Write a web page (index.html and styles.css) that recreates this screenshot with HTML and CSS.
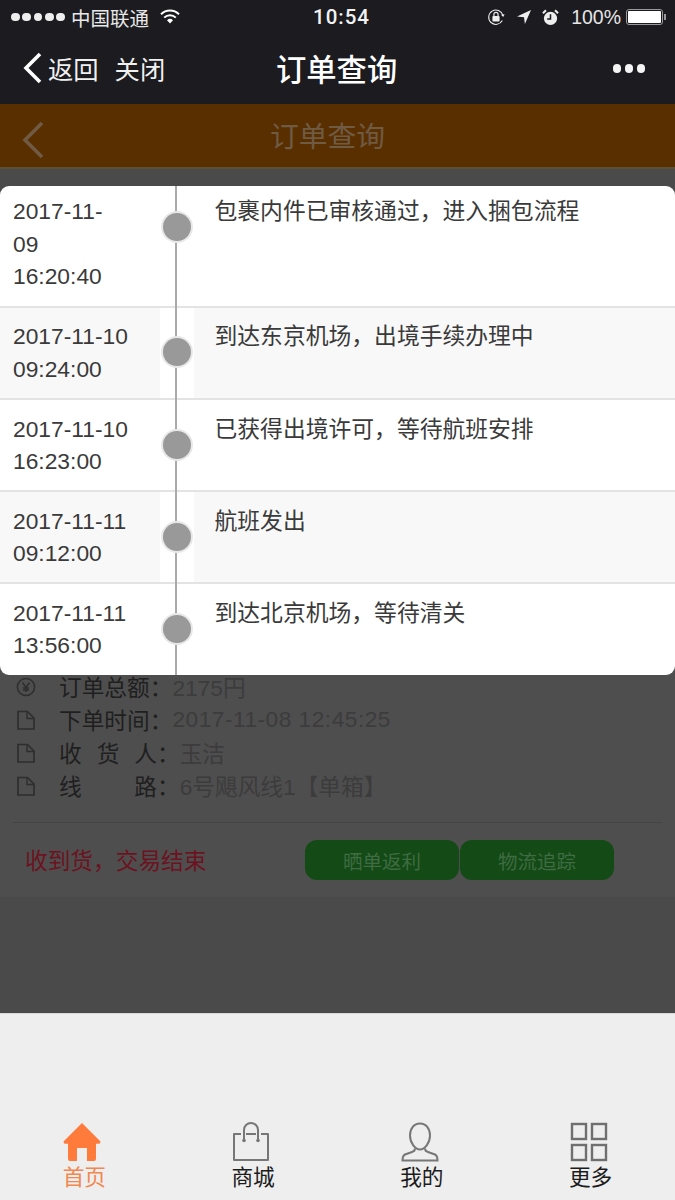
FILE: index.html
```html
<!DOCTYPE html>
<html lang="zh-CN">
<head>
<meta charset="utf-8">
<title>订单查询</title>
<link rel="stylesheet" href="styles.css">
</head>
<body>
<div class="app">
  <div class="chrome">
    <div class="status">
      <div class="status-left">
        <span class="signal"><i></i><i></i><i></i><i></i><i></i></span>
        <span class="carrier">中国联通</span>
        <svg class="wifi" viewBox="0 0 20 15" width="20" height="15"><path d="M1 5.2a13 13 0 0 1 18 0" fill="none" stroke="#fff" stroke-width="2"/><path d="M4.2 8.6a8.4 8.4 0 0 1 11.6 0" fill="none" stroke="#fff" stroke-width="2"/><path d="M7 11.3a4.3 4.3 0 0 1 6 0L10 14.4z" fill="#fff"/></svg>
      </div>
      <div class="clock">10:54</div>
      <div class="status-right">
        <svg class="st-icon" viewBox="0 0 20 20" width="18" height="18"><path d="M17.6 8A8 8 0 1 0 17 14" fill="none" stroke="#eee" stroke-width="1.2"/><path d="M15.6 7.6 18 10l1.6-3z" fill="#eee"/><rect x="6" y="9" width="8" height="6" rx="1" fill="#eee"/><path d="M7.7 9V7.2a2.3 2.3 0 0 1 4.6 0V9" fill="none" stroke="#eee" stroke-width="1.3"/></svg>
        <svg class="st-icon st-arrow" viewBox="0 0 16 16" width="16" height="16"><path d="M15 1 1 7.4l7 .9.9 6.7z" fill="#eee"/></svg>
        <svg class="st-icon" viewBox="0 0 18 18" width="17" height="17"><circle cx="9" cy="10" r="7" fill="#eee"/><path d="M9 5.5V10.5H5.5" fill="none" stroke="#1b1b20" stroke-width="1.6"/><path d="M1 4.5 4.2 1.4M17 4.5 13.8 1.4" stroke="#eee" stroke-width="2.2"/></svg>
        <span class="battery-text">100%</span>
        <span class="battery"><b></b></span>
      </div>
    </div>
    <div class="nav">
      <div class="nav-left">
        <svg class="nav-back" viewBox="0 0 20 32" width="20" height="32"><path d="M17 2 3 16l14 14" fill="none" stroke="#fff" stroke-width="3.6"/></svg>
        <span class="nav-link">返回</span>
        <span class="nav-link nav-close">关闭</span>
      </div>
      <div class="nav-title">订单查询</div>
      <div class="nav-more"><i></i><i></i><i></i></div>
    </div>
  </div>

  <header class="page-head">
    <svg class="page-back" viewBox="0 0 24 38" width="24" height="38"><path d="M21 2 4 19l17 17" fill="none" stroke="#6f5a44" stroke-width="3.6"/></svg>
    <h1 class="page-title">订单查询</h1>
  </header>

  <main class="page">
    <section class="order">
      <div class="info-row">
        <svg class="info-icon" viewBox="0 0 20 20" width="20" height="20"><circle cx="10" cy="10" r="8.6" fill="none" stroke="#2e2e2e" stroke-width="1.5"/><path d="M6.5 5.5 10 10.5l3.5-5M10 10.5V15M7 11h6M7 13h6" fill="none" stroke="#2e2e2e" stroke-width="1.4"/></svg>
        <span class="label"><span class="label-fill">订单总额</span>：</span>
        <span class="value">2175円</span>
      </div>
      <div class="info-row">
        <svg class="info-icon" viewBox="0 0 20 20" width="20" height="20"><path d="M2 1.500h9.500L18 8v11H2z" fill="none" stroke="#2e2e2e" stroke-width="1.700"/><path d="M11 1.500v7h7" fill="none" stroke="#2e2e2e" stroke-width="1.400"/></svg>
        <span class="label"><span class="label-fill">下单时间</span>：</span>
        <span class="value value-date">2017-11-08 12:45:25</span>
      </div>
      <div class="info-row">
        <svg class="info-icon" viewBox="0 0 20 20" width="20" height="20"><path d="M2 1.500h9.500L18 8v11H2z" fill="none" stroke="#2e2e2e" stroke-width="1.700"/><path d="M11 1.500v7h7" fill="none" stroke="#2e2e2e" stroke-width="1.400"/></svg>
        <span class="label"><span class="label-fill label-wide"><span>收</span><span>货</span><span>人</span></span>：</span>
        <span class="value">玉洁</span>
      </div>
      <div class="info-row">
        <svg class="info-icon" viewBox="0 0 20 20" width="20" height="20"><path d="M2 1.500h9.500L18 8v11H2z" fill="none" stroke="#2e2e2e" stroke-width="1.700"/><path d="M11 1.500v7h7" fill="none" stroke="#2e2e2e" stroke-width="1.400"/></svg>
        <span class="label"><span class="label-fill label-wide"><span>线</span><span>路</span></span>：</span>
        <span class="value">6号飓风线1【单箱】</span>
      </div>
      <div class="order-foot">
        <span class="order-state">收到货，交易结束</span>
        <div class="order-actions">
          <a class="btn">晒单返利</a>
          <a class="btn">物流追踪</a>
        </div>
      </div>
    </section>
  </main>

  <nav class="tabs">
    <a class="tab tab-active">
      <svg viewBox="0 0 38 40" width="38" height="40"><path d="M19 1 37 19a1.6 1.6 0 0 1-1.2 2.7H33V37a2 2 0 0 1-2 2h-7V26h-10v13H7a2 2 0 0 1-2-2V21.700H2.200A1.600 1.600 0 0 1 1 19z" fill="#ff7b3c"/></svg>
      <span>首页</span>
    </a>
    <a class="tab">
      <svg viewBox="0 0 38 40" width="38" height="40"><path d="M9 12H2v26h34V12h-7M14 12h10" fill="none" stroke="#777" stroke-width="2" stroke-linejoin="round"/><path d="M12 18V8a7 7 0 0 1 14 0v10" fill="none" stroke="#777" stroke-width="2"/><circle cx="12" cy="18.500" r="1.800" fill="#777"/><circle cx="26" cy="18.500" r="1.800" fill="#777"/></svg>
      <span>商城</span>
    </a>
    <a class="tab">
      <svg viewBox="0 0 38 40" width="38" height="40"><path d="M19 1.500c6 0 10 5 10 12 0 7-5 14-10 14s-10-7-10-14c0-7 4-12 10-12z" fill="none" stroke="#777" stroke-width="2"/><path d="M14 26.500c0 2-1 3-3 3.500l-7 2.500c-2 1-2.500 3-2.500 6h35c0-3-.5-5-2.500-6l-7-2.500c-2-.5-3-1.500-3-3.500" fill="none" stroke="#777" stroke-width="2"/></svg>
      <span>我的</span>
    </a>
    <a class="tab">
      <svg viewBox="0 0 38 40" width="38" height="40"><g fill="none" stroke="#6f6f6f" stroke-width="2.400"><rect x="2" y="2" width="14" height="15"/><rect x="22" y="2" width="14" height="15"/><rect x="2" y="23" width="14" height="15"/><rect x="22" y="23" width="14" height="15"/></g></svg>
      <span>更多</span>
    </a>
  </nav>

  <div class="timeline">
    <div class="tl-row tl-first">
      <div class="tl-time">2017-11-<br>09<br>16:20:40</div>
      <div class="tl-mid"><span class="tl-dot"></span></div>
      <div class="tl-text">包裹内件已审核通过，进入捆包流程</div>
    </div>
    <div class="tl-row tl-alt">
      <div class="tl-time">2017-11-10<br>09:24:00</div>
      <div class="tl-mid"><span class="tl-dot"></span></div>
      <div class="tl-text">到达东京机场，出境手续办理中</div>
    </div>
    <div class="tl-row tl-low">
      <div class="tl-time">2017-11-10<br>16:23:00</div>
      <div class="tl-mid"><span class="tl-dot"></span></div>
      <div class="tl-text">已获得出境许可，等待航班安排</div>
    </div>
    <div class="tl-row tl-alt tl-low">
      <div class="tl-time">2017-11-11<br>09:12:00</div>
      <div class="tl-mid"><span class="tl-dot"></span></div>
      <div class="tl-text">航班发出</div>
    </div>
    <div class="tl-row tl-last tl-low">
      <div class="tl-time">2017-11-11<br>13:56:00</div>
      <div class="tl-mid"><span class="tl-dot"></span></div>
      <div class="tl-text">到达北京机场，等待清关</div>
    </div>
  </div>
</div>
</body>
</html>
```

FILE: styles.css
```css
* { box-sizing: border-box; }
html, body { margin: 0; padding: 0; }
body { font-family: "Liberation Sans", "Noto Sans CJK SC", sans-serif; }
a { text-decoration: none; }

.app {
  position: relative;
  width: 675px;
  height: 1200px;
  display: flex;
  flex-direction: column;
  overflow: hidden;
  background: #eee;
}

/* Browser chrome */
.chrome { height: 104px; background: #1b1b20; color: #fff; flex: none; }
.status {
  height: 34px;
  display: grid;
  grid-template-columns: 302px 56px 1fr;
  align-items: center;
  padding: 0 9px 0 11px;
}
.status-left, .status-right { display: flex; align-items: center; }
.status-right { justify-content: flex-end; }
.signal { display: flex; gap: 2.500px; }
.signal i { width: 8.800px; height: 8.800px; border-radius: 50%; background: #eee; }
.carrier { font-size: 19.500px; margin-left: 6px; color: #e8e8e8; }
.wifi { margin-left: 11px; margin-top: -2px; }
.clock { font: 500 20.500px Roboto, sans-serif; letter-spacing: 1px; color: #f2f2f2; text-align: center; }
.st-icon { display: block; margin-right: 11px; }
.st-arrow { margin-right: 10px; }
.battery-text { font-size: 19.500px; color: #e6e6e6; margin-left: 1px; }
.battery {
  width: 37px;
  height: 16px;
  margin-left: 5px;
  margin-right: 3px;
  padding: 1px;
  border: 1px solid #999;
  border-radius: 3px;
  position: relative;
}
.battery b { display: block; height: 100%; background: #fff; border-radius: 1px; }
.battery::after {
  content: "";
  position: absolute;
  right: -4px;
  top: 4px;
  width: 2px;
  height: 6px;
  background: #999;
}

.nav {
  height: 70px;
  display: grid;
  grid-template-columns: 253px 121px 1fr;
  align-items: center;
  padding: 0 30px 3px 23px;
}
.nav-left { display: flex; align-items: center; }
.nav-back { margin-right: 5px; }
.nav-link { font-size: 25.300px; color: #f0f0f0; }
.nav-close { margin-left: 16px; }
.nav-title { font-size: 30.300px; font-weight: 500; color: #fff; white-space: nowrap; }
.nav-more { display: flex; justify-content: flex-end; gap: 3.500px; margin-top: 2px; }
.nav-more i { width: 8.500px; height: 8.500px; border-radius: 50%; background: #f4f4f4; }

/* Dimmed page */
.page-head {
  height: 65px;
  flex: none;
  background: #5a2f00;
  border-bottom: 2px solid #5c5034;
  padding-bottom: 2px;
  position: relative;
  display: flex;
  align-items: center;
  justify-content: center;
}
.page-back { position: absolute; left: 21px; top: 17px; }
.page-title { margin: 0 0 0 -20px; font-size: 28.800px; font-weight: 400; color: #6f5a44; }

.page { height: 844px; flex: none; background: #4a4a4a; padding-top: 501px; }
.order { height: 227px; background: #4e4e4e; padding: 0 13px 0 16px; }
.info-row {
  height: 33px;
  display: flex;
  align-items: center;
  font-size: 22.700px;
}
.info-icon { flex: none; margin-right: 23px; }
.label { display: flex; color: #1f1f1f; white-space: nowrap; }
.label-fill { display: block; }
.label-wide { width: 98px; display: flex; justify-content: space-between; }
.value { color: #3c3c3c; white-space: nowrap; }
.value-date { letter-spacing: 0.5px; }
.order-foot {
  margin-top: 20px;
  height: 75px;
  border-top: 1px solid #444;
  display: flex;
  align-items: center;
  margin-left: -3px;
}
.order-state { margin-left: 12px; width: 280px; font-size: 22.700px; color: #6d1220; flex: none; position: relative; top: -1px; }
.order-actions { display: flex; gap: 1px; }
.btn {
  width: 154px;
  height: 40px;
  border-radius: 12px;
  background: #134a16;
  color: #3f6c42;
  font-size: 19.500px;
  display: flex;
  align-items: center;
  justify-content: center;
}

/* Tabs */
.tabs {
  flex: 1;
  background: #eee;
  display: grid;
  grid-template-columns: repeat(4, 1fr);
  align-items: end;
  padding: 0 0 7px;
  border-top: 1px solid #d8d8d8;
}
.tab { display: flex; flex-direction: column; align-items: center; color: #1c1c1c; font-size: 21.700px; line-height: 30px; }
.tab svg { display: block; margin: 0 4px 1px 0; }
.tab-active { color: #f2874f; }

/* Timeline modal */
.timeline {
  position: absolute;
  left: 0;
  right: 0;
  top: 186px;
  height: 489px;
  background: #fff;
  border-radius: 9px;
  overflow: hidden;
  font-size: 22.800px;
  line-height: 32.500px;
  color: #3a3a3a;
}
.timeline::before {
  content: "";
  position: absolute;
  left: 175px;
  top: 0;
  bottom: 0;
  width: 2px;
  background: #aaa;
  z-index: 1;
}
.tl-row {
  display: grid;
  grid-template-columns: 160px 34px 1fr;
  height: 92px;
  border-bottom: 2px solid #e3e3e3;
}
.tl-first { height: 122px; }
.tl-last { height: 91px; border-bottom: 0; }
.tl-time { padding: 12px 0 0 13px; white-space: nowrap; }
.tl-text { padding: 12px 0 0 20.500px; }
.tl-first .tl-time, .tl-first .tl-text { padding-top: 9px; }
.tl-low .tl-time, .tl-low .tl-text { padding-top: 12.500px; }
.tl-alt .tl-time, .tl-alt .tl-text { background: #f8f8f8; }
.tl-mid { display: flex; justify-content: center; padding-top: 30px; position: relative; z-index: 2; }
.tl-first .tl-mid { padding-top: 27px; }
.tl-low .tl-mid { padding-top: 31px; }
.tl-dot {
  width: 28px;
  height: 28px;
  border-radius: 50%;
  background: #999;
  box-shadow: 0 0 0 2px #e8e8e8;
}
```
